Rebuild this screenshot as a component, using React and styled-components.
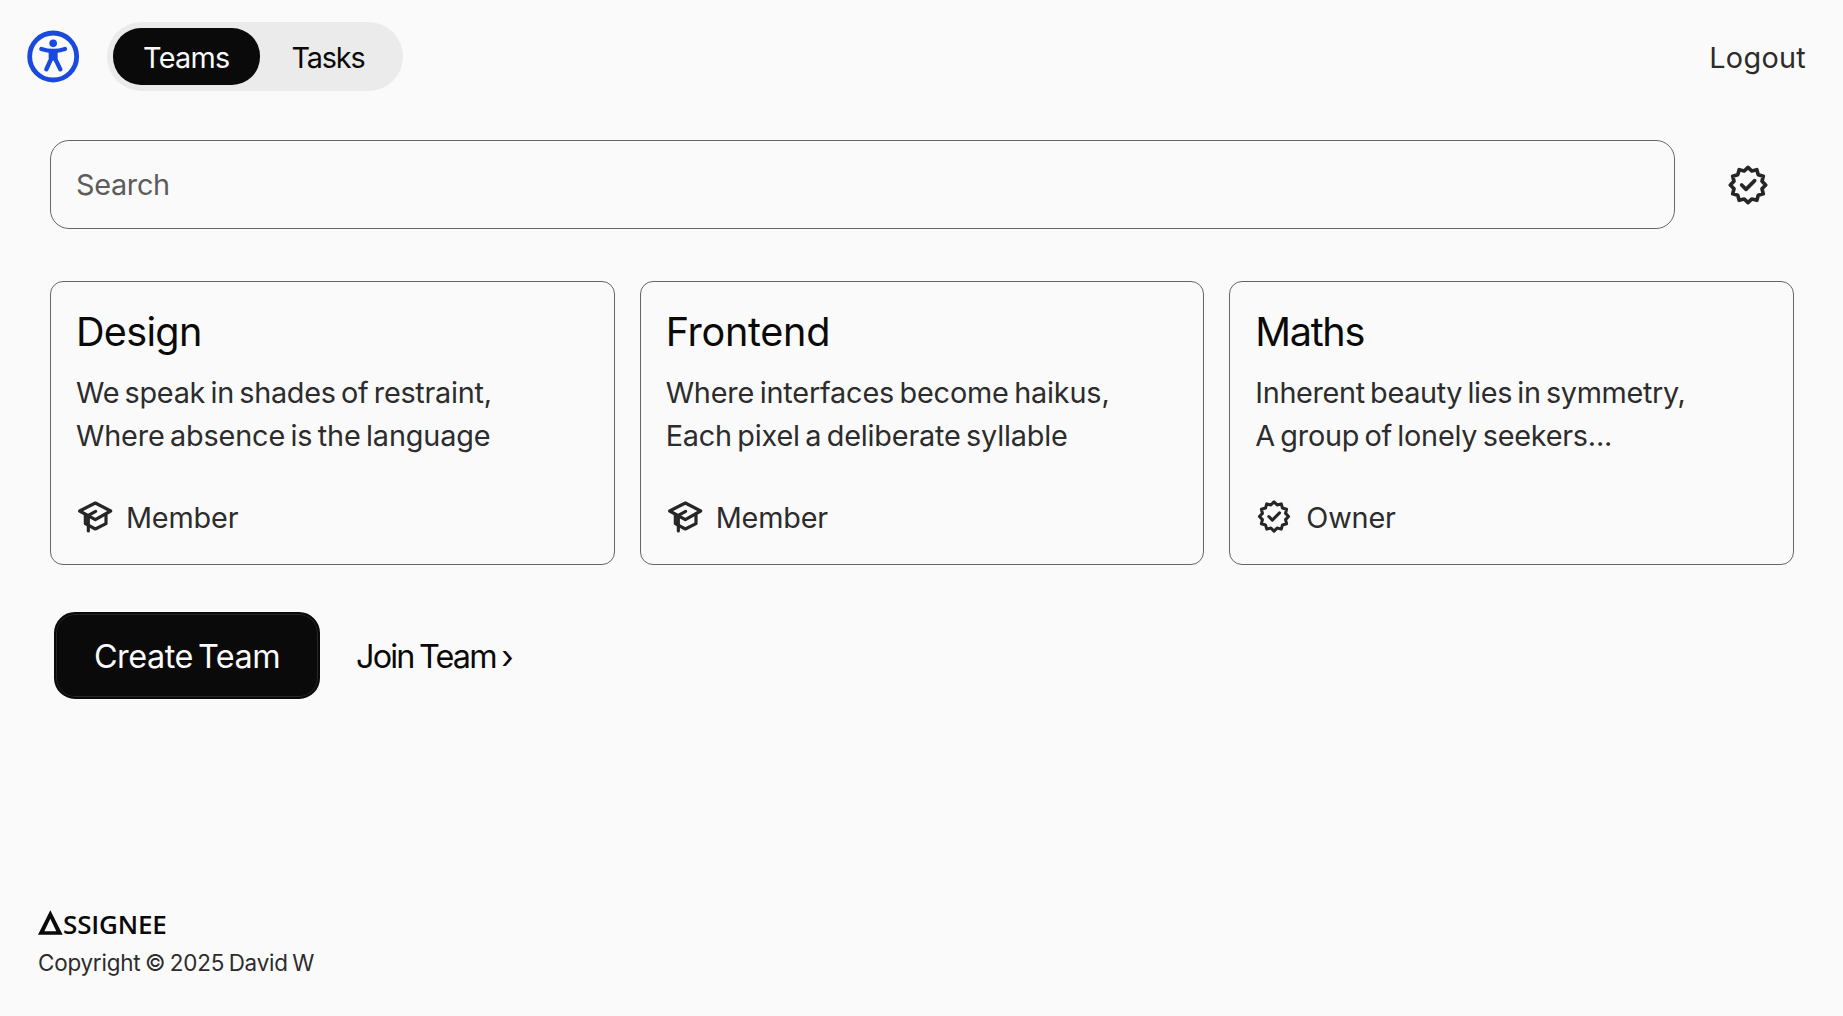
import React from "react";
import styled, { createGlobalStyle } from "styled-components";

const GlobalStyle = createGlobalStyle`
  *, *::before, *::after { box-sizing: border-box; }
  body {
    margin: 0;
    background: #fafafa;
    color: #2c2c2c;
    font-family: Inter, "Open Sans", sans-serif;
    font-size: 28.8px;
    font-weight: 375;
    line-height: 1.5;
  }
  button, input { font: inherit; color: inherit; }
`;

const Page = styled.div`
  display: flex;
  flex-direction: column;
  min-height: 1016px;
`;

const Header = styled.header`
  display: flex;
  align-items: center;
  height: 69px;
  margin-top: 22px;
  padding: 0 37px 0 27px;
`;

const Nav = styled.nav`
  display: flex;
  align-items: center;
  width: 296px;
  height: 69px;
  margin-left: 27px;
  padding: 0 6px 0 5.5px;
  border-radius: 35px;
  background: #ebebeb;
`;

const Tab = styled.button`
  width: ${(p) => (p.$active ? 147.5 : 136)}px;
  height: 57px;
  padding: 2px 0 0;
  border: 0;
  border-radius: 28px;
  background: ${(p) => (p.$active ? "#0a0a0a" : "transparent")};
  color: ${(p) => (p.$active ? "#fafafa" : "#0a0a0a")};
  letter-spacing: ${(p) => p.$tracking}px;
`;

const Logout = styled.button`
  margin-left: auto;
  padding: 2px 0 0;
  border: 0;
  background: none;
  letter-spacing: 0.3px;
`;

const Main = styled.main`
  padding: 49px 49px 0 50px;
`;

const SearchRow = styled.div`
  display: flex;
  align-items: center;
  gap: 25px;
`;

const SearchInput = styled.input`
  flex: 1;
  min-width: 0;
  height: 89px;
  padding: 0 25px 1px;
  border: 1px solid #666;
  border-radius: 19px;
  background: transparent;
  outline: 0;
  letter-spacing: -0.3px;
  &::placeholder { color: #5c5c5c; opacity: 1; }
`;

const FilterButton = styled.button`
  display: flex;
  align-items: center;
  justify-content: center;
  width: 94px;
  height: 89px;
  padding: 0 0 0 1px;
  border: 0;
  background: none;
`;

const Cards = styled.section`
  display: grid;
  grid-template-columns: repeat(3, 1fr);
  gap: 25px;
  margin-top: 52px;
`;

const Card = styled.article`
  height: 284px;
  padding: 20px 25px;
  border: 1px solid #666;
  border-radius: 13px;
`;

const Title = styled.h2`
  margin: 0;
  color: #0a0a0a;
  font-size: 39.6px;
  font-weight: 430;
  line-height: 60px;
  letter-spacing: ${(p) => p.$tracking}px;
`;

const Verse = styled.p`
  margin: 9px 0 0;
  line-height: 43.2px;
`;

const Line = styled.span`
  display: block;
  white-space: nowrap;
  letter-spacing: ${(p) => p.$tracking}px;
  word-spacing: -2.5px;
`;

const Role = styled.div`
  display: flex;
  align-items: center;
  gap: ${(p) => p.$gap}px;
  margin-top: 37px;
  line-height: 43px;
`;

const RoleName = styled.span`
  padding-top: 2px;
  letter-spacing: -0.15px;
`;

const Actions = styled.div`
  display: flex;
  align-items: center;
  gap: 36px;
  margin: 47px 0 0 4px;
`;

const CreateButton = styled.button`
  width: 266px;
  height: 87px;
  padding: 3px 0 0;
  border: 2px solid #0a0a0a;
  border-radius: 21px;
  background: #0a0a0a;
  box-shadow: inset 0 0 0 1px #262626;
  color: #fafafa;
  font-size: 32.4px;
  letter-spacing: -0.5px;
  word-spacing: -3.5px;
`;

const JoinLink = styled.a`
  padding-top: 3px;
  color: #0a0a0a;
  font-size: 32.4px;
  letter-spacing: -1.85px;
  word-spacing: -1.8px;
  white-space: nowrap;
`;

const Footer = styled.footer`
  margin-top: auto;
  padding: 0 0 36px 38px;
`;

const Brand = styled.div`
  display: flex;
  align-items: flex-end;
  height: 25px;
  color: #0a0a0a;
`;

const BrandName = styled.span`
  height: 25px;
  font: 600 26px/29px "Open Sans", "Noto Sans", sans-serif;
  letter-spacing: -0.15px;
`;

const Copyright = styled.p`
  margin: 11px 0 0;
  font-size: 22.4px;
  line-height: 34px;
  letter-spacing: -0.2px;
  word-spacing: -1.5px;
`;

const starPoints = Array.from({ length: 24 }, (_, i) => {
  const r = i % 2 ? 43.5 : 53;
  const a = (i * Math.PI) / 12;
  return `${(60 + r * Math.sin(a)).toFixed(2)},${(60 - r * Math.cos(a)).toFixed(2)}`;
}).join(" ");

function VerifiedIcon({ width, size, stroke = 11 }) {
  const pad = ((width / size) * 120 - 120) / 2;
  return (
    <svg width={width} height={size} viewBox={`${-pad} 0 ${120 + pad * 2} 120`} fill="none" stroke="#262626" strokeLinejoin="round" strokeLinecap="round" strokeWidth={stroke}>
      <polygon points={starPoints} />
      <path d="M41 60 L54 73 L80 47" />
    </svg>
  );
}

function GraduateIcon() {
  return (
    <svg width="38" height="36" viewBox="6 8 114 108" fill="none" stroke="#262626" strokeWidth="9.5" strokeLinejoin="round" strokeLinecap="round">
      <path d="M64 20 L110 44 L64 70 L17 44 Z" />
      <path d="M34 54 V82 L64 98 L96 82 V54" />
      <path d="M65 45 L43 57 V104" />
    </svg>
  );
}

function AccessibilityIcon() {
  return (
    <svg width="53" height="54" viewBox="15 13 159 162" fill="none" stroke="#1a49e0" strokeLinecap="round" strokeLinejoin="round">
      <circle cx="93.5" cy="92.5" r="70.5" strokeWidth="14.5" />
      <circle cx="93.5" cy="53" r="11.5" fill="#1a49e0" stroke="none" />
      <path d="M58 70 Q76 76 93.5 76 Q111 76 129 70" strokeWidth="13" />
      <path d="M80 74 H107 V96 L103 110 L93.5 104 L84 110 L80 96 Z" fill="#1a49e0" stroke="none" />
      <path d="M88 98 L73 131 M99 98 L115 131" strokeWidth="13" />
    </svg>
  );
}

function BrandMark() {
  return (
    <svg width="25" height="25" viewBox="0 0 75 75">
      <path fill="#0a0a0a" fillRule="evenodd" d="M0 74 L37 1 L74 74 Z M19 64 H55 L37 26 Z" />
    </svg>
  );
}

const teams = [
  { name: "Design", tracking: -0.7, role: "Member", lines: [["We speak in shades of restraint,", -0.26], ["Where absence is the language", -0.15]] },
  { name: "Frontend", tracking: -0.3, role: "Member", lines: [["Where interfaces become haikus,", -0.16], ["Each pixel a deliberate syllable", -0.18]] },
  { name: "Maths", tracking: -1.3, role: "Owner", lines: [["Inherent beauty lies in symmetry,", -0.33], ["A group of lonely seekers...", -0.23]] },
];

export default function App() {
  return (
    <Page>
      <GlobalStyle />
      <Header>
        <AccessibilityIcon />
        <Nav>
          <Tab $active $tracking={-0.75}>Teams</Tab>
          <Tab $tracking={-1.2}>Tasks</Tab>
        </Nav>
        <Logout>Logout</Logout>
      </Header>
      <Main>
        <SearchRow>
          <SearchInput placeholder="Search" />
          <FilterButton aria-label="Owned teams">
            <VerifiedIcon width={40} size={40} />
          </FilterButton>
        </SearchRow>
        <Cards>
          {teams.map((team) => (
            <Card key={team.name}>
              <Title $tracking={team.tracking}>{team.name}</Title>
              <Verse>
                {team.lines.map(([text, tracking]) => (
                  <Line key={text} $tracking={tracking}>{text}</Line>
                ))}
              </Verse>
              <Role $gap={team.role === "Owner" ? 13 : 12}>
                {team.role === "Owner" ? <VerifiedIcon width={38} size={33} /> : <GraduateIcon />}
                <RoleName>{team.role}</RoleName>
              </Role>
            </Card>
          ))}
        </Cards>
        <Actions>
          <CreateButton>Create Team</CreateButton>
          <JoinLink>Join Team ›</JoinLink>
        </Actions>
      </Main>
      <Footer>
        <Brand>
          <BrandMark />
          <BrandName>SSIGNEE</BrandName>
        </Brand>
        <Copyright>Copyright © 2025 David W</Copyright>
      </Footer>
    </Page>
  );
}
